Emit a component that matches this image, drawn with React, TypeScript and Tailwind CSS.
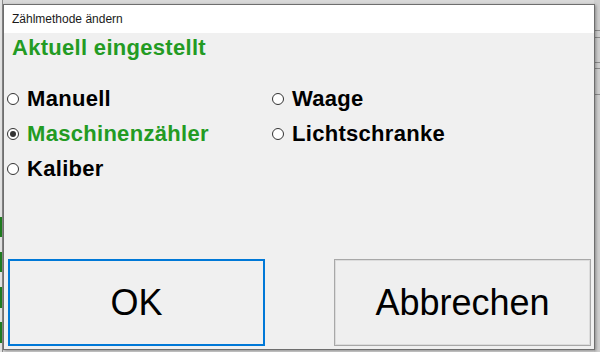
import React from "react";

const font = { fontFamily: '"Liberation Sans", Arial, sans-serif' };

function Radio({ label, checked }: { label: string; checked?: boolean }) {
  return (
    <div className="flex h-[35px] items-center gap-[8px]">
      <span className="flex h-[12px] w-[12px] items-center justify-center rounded-full border border-[#333333] bg-white">
        {checked && <span className="h-[6px] w-[6px] rounded-full bg-[#333333]" />}
      </span>
      <span
        className={`text-[22px] font-bold leading-none tracking-[0.3px] ${
          checked ? "text-[#239b23]" : "text-black"
        }`}
      >
        {label}
      </span>
    </div>
  );
}

export default function App() {
  return (
    <div className="relative h-[352px] w-[600px] overflow-hidden bg-[#d9d9d9]" style={font}>
      {/* app behind the dialog */}
      <div className="flex h-full w-full">
        <div className="flex w-[3px] flex-col border-r border-[#8a8a8a] bg-[#e3e3e3]">
          <div className="h-[217px]" />
          <div className="h-[20px] bg-[#1f7d1f]" />
          <div className="h-[15px]" />
          <div className="h-[20px] bg-[#1f7d1f]" />
          <div className="h-[15px]" />
          <div className="h-[21px] bg-[#1f7d1f]" />
          <div className="h-[14px]" />
          <div className="h-[21px] bg-[#1f7d1f]" />
        </div>
        <div className="flex-1" />
        <div className="flex w-[6px] flex-col bg-[#cfcfcf]">
          <div className="h-[30px]" />
          <div className="h-[1px] bg-[#8c8c8c]" />
          <div className="h-[6px]" />
          <div className="h-[1px] bg-[#8c8c8c]" />
          <div className="h-[24px]" />
          <div className="h-[1px] bg-[#8c8c8c]" />
          <div className="h-[5px]" />
          <div className="h-[1px] bg-[#8c8c8c]" />
          <div className="h-[25px]" />
          <div className="h-[1px] bg-[#8c8c8c]" />
        </div>
      </div>

      {/* dialog window */}
      <div className="absolute left-[3px] top-[4px] flex h-[346px] w-[592px] flex-col border border-[#6e6e6e] bg-[#f0f0f0] shadow-[1px_1px_3px_rgba(0,0,0,0.35)]">
        <div className="flex h-[28px] items-center bg-white pl-[8px] text-[12px] text-[#1a1a1a]">
          Zählmethode ändern
        </div>
        <div className="flex flex-1 flex-col px-[3px] pb-[3px] pt-[4px]">
          <div className="pl-[5px] text-[22px] font-bold leading-none tracking-[0.3px] text-[#239b23]">
            Aktuell eingestellt
          </div>
          <div className="mt-[22px] flex">
            <div className="flex w-[265px] flex-col">
              <Radio label="Manuell" />
              <Radio label="Maschinenzähler" checked />
              <Radio label="Kaliber" />
            </div>
            <div className="flex flex-col">
              <Radio label="Waage" />
              <Radio label="Lichtschranke" />
            </div>
          </div>
          <div className="mt-auto flex items-end justify-between pl-[1px]">
            <button className="flex h-[87px] w-[257px] items-center justify-center border-2 border-[#0078d7] bg-[#f0f0f0] text-[36px] text-black">
              OK
            </button>
            <button className="flex h-[87px] w-[257px] items-center justify-center border border-[#a8a8a8] bg-[#efefef] text-[36px] text-black shadow-[inset_0_0_0_1px_#dcdcdc]">
              Abbrechen
            </button>
          </div>
        </div>
      </div>
    </div>
  );
}
